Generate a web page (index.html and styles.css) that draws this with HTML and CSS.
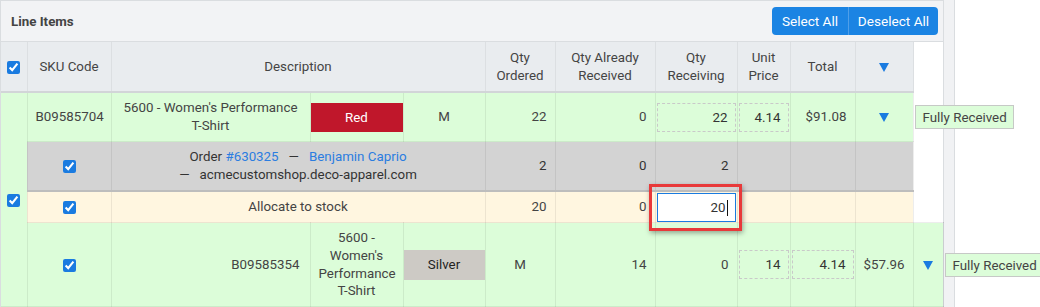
FILE: index.html
```html
<!DOCTYPE html>
<html>
<head>
	<meta charset="utf-8">
	<meta name="viewport" content="width=device-width, initial-scale=1">
	<title>Line Items</title>
	<link rel="stylesheet" href="styles.css">
</head>
<body>
	<div class="page">
		<div class="panel">
			<div class="panel-head">
				<span class="panel-title">Line Items</span>
				<div class="btn-group">
					<button class="btn btn-select">Select All</button>
					<button class="btn btn-deselect">Deselect All</button>
				</div>
			</div>
			<table class="items">
				<colgroup>
					<col style="width:26px"><col style="width:84px"><col style="width:199px">
					<col style="width:93px"><col style="width:82px"><col style="width:70px">
					<col style="width:100px"><col style="width:82px"><col style="width:53px">
					<col style="width:65px"><col style="width:58px"><col style="width:30px">
					<col style="width:0px">
				</colgroup>
				<thead>
					<tr>
						<th class="col-check"><input type="checkbox" checked></th>
						<th>SKU Code</th>
						<th colspan="3">Description</th>
						<th>Qty<br>Ordered</th>
						<th>Qty Already<br>Received</th>
						<th>Qty<br>Receiving</th>
						<th>Unit<br>Price</th>
						<th>Total</th>
						<th><svg class="tri" width="10" height="9" viewBox="0 0 10 9"><polygon points="0,0 10,0 5,9"/></svg></th>
					</tr>
				</thead>
				<tbody>
					<tr class="row-item row-first">
						<td class="col-check" rowspan="4"><input type="checkbox" checked></td>
						<td class="center">B09585704</td>
						<td class="center">5600 - Women's Performance T-Shirt</td>
						<td class="cell-swatch"><span class="swatch swatch-red">Red</span></td>
						<td class="center">M</td>
						<td class="num">22</td>
						<td class="num">0</td>
						<td class="cell-input"><span class="qty-field">22</span></td>
						<td class="cell-input"><span class="qty-field">4.14</span></td>
						<td class="num">$91.08</td>
						<td class="center"><svg class="tri" width="10" height="9" viewBox="0 0 10 9"><polygon points="0,0 10,0 5,9"/></svg></td>
						<td class="cell-badge"><span class="badge">Fully Received</span></td>
					</tr>
					<tr class="row-order">
						<td class="center"><input type="checkbox" checked></td>
						<td class="center" colspan="3">
							Order <a href="#">#630325</a><span class="sep">—</span><a href="#">Benjamin Caprio</a><br>
							<span class="sep sep-lead">—</span>acmecustomshop.deco-apparel.com
						</td>
						<td class="num">2</td>
						<td class="num">0</td>
						<td class="num">2</td>
						<td></td>
						<td></td>
						<td></td>
					</tr>
					<tr class="row-stock">
						<td class="center"><input type="checkbox" checked></td>
						<td class="center stock-label" colspan="3">Allocate to stock</td>
						<td class="num">20</td>
						<td class="num">0</td>
						<td class="cell-input">
							<span class="highlight"><span class="qty-field is-active">20<span class="caret"></span></span></span>
						</td>
						<td></td>
						<td></td>
						<td></td>
					</tr>
					<tr class="row-item row-last">
						<td class="center"><input type="checkbox" checked></td>
						<td class="num sku-right">B09585354</td>
						<td class="center">5600 - Women's Performance T-Shirt</td>
						<td class="cell-swatch"><span class="swatch swatch-silver">Silver</span></td>
						<td class="center">M</td>
						<td class="num">14</td>
						<td class="num">0</td>
						<td class="cell-input"><span class="qty-field">14</span></td>
						<td class="cell-input"><span class="qty-field">4.14</span></td>
						<td class="num">$57.96</td>
						<td class="center"><svg class="tri" width="10" height="9" viewBox="0 0 10 9"><polygon points="0,0 10,0 5,9"/></svg></td>
						<td class="cell-badge"><span class="badge">Fully Received</span></td>
					</tr>
				</tbody>
			</table>
		</div>
		<div class="side-strip"></div>
	</div>
</body>
</html>
```

FILE: styles.css
```css
		body{
			margin: 0;
			font-family: Roboto, "Liberation Sans", sans-serif;
			font-size: 13.33px;
			color: #444;
			background: #fff;
		}
		.page{
			display: flex;
			height: 307px;
			overflow: hidden;
		}
		.panel{
			width: 942px;
			border: 1px solid #dadde0;
			border-bottom: none;
			background: #fff;
			position: relative;
			z-index: 1;
		}
		.side-strip{
			width: 10px;
			background: #f1f2f4;
			border-right: 1px solid #dadde0;
		}
		.panel-head{
			display: flex;
			align-items: center;
			justify-content: space-between;
			height: 40px;
			padding: 0 5px 0 10px;
			background: #f2f3f5;
			border-bottom: 1px solid #dadde0;
		}
		.panel-title{
			font-weight: bold;
			color: #444;
		}
		.btn-group{
			display: flex;
			border-radius: 4px;
			overflow: hidden;
		}
		.btn{
			height: 28px;
			border: none;
			background: #1b84e3;
			color: #fff;
			font-family: inherit;
			font-size: 13.6px;
			padding: 0;
		}
		.btn-select{
			width: 76px;
		}
		.btn-deselect{
			width: 90px;
			border-left: 1px solid #4f9fe9;
		}
		.items{
			border-collapse: collapse;
			table-layout: fixed;
			width: 942px;
			line-height: 17.6px;
		}
		.items th{
			height: 49px;
			padding: 0 6px;
			background: #e9ecef;
			font-weight: normal;
			color: #444;
			text-align: center;
			border: 1px solid #dcdfe2;
			border-top: none;
			border-bottom: 2px solid #d2d5d8;
		}
		.items th:first-child{
			border-left: none;
		}
		.items td{
			padding: 0 8px;
			vertical-align: middle;
			border: 1px solid rgba(0, 0, 0, 0.07);
		}
		.items td:first-child{
			border-left: none;
		}
		.items input[type="checkbox"]{
			margin: 0;
			width: 13px;
			height: 13px;
			vertical-align: middle;
			accent-color: #1a7be0;
		}
		.items .col-check{
			padding: 0;
			text-align: center;
		}
		.row-item td{
			background: #dcfdd9;
		}
		.row-first td{
			height: 48px;
		}
		.row-last td{
			height: 83px;
		}
		.row-order td{
			height: 48px;
			background: #d3d3d3;
			color: #333;
			border-bottom: 2px solid #bdbdbd;
		}
		.row-stock td{
			height: 30px;
			background: #fff6e0;
			color: #444;
		}
		.items td.cell-badge{
			background: none;
			border: none;
			padding: 0;
			white-space: nowrap;
		}
		.center{
			text-align: center;
		}
		.num{
			text-align: right;
		}
		.items td.num{
			padding-right: 8px;
		}
		.items td.sku-right{
			padding-right: 10px;
		}
		.stock-label{
			padding-left: 22px;
		}
		.tri{
			display: inline-block;
			vertical-align: middle;
			fill: #1a7be0;
		}
		.items td.cell-swatch{
			padding: 0;
		}
		.swatch{
			display: block;
			height: 29px;
			line-height: 29px;
			text-align: center;
		}
		.swatch-red{
			background: #c0172b;
			color: #fff;
		}
		.swatch-silver{
			height: 30px;
			line-height: 30px;
			background: #cdcac5;
			color: #222;
		}
		.items td.cell-input{
			padding: 0 1px;
		}
		.qty-field{
			display: block;
			box-sizing: border-box;
			height: 29px;
			line-height: 27px;
			padding: 0 7px;
			border: 1px dashed #c9c9c9;
			text-align: right;
			color: #333;
		}
		.qty-field.is-active{
			background: #fff;
			border: 1px solid #1a7be0;
		}
		.caret{
			display: inline-block;
			width: 1px;
			height: 16px;
			margin-left: 1px;
			background: #111;
			vertical-align: middle;
		}
		.highlight{
			display: block;
			position: relative;
		}
		.highlight::after{
			content: "";
			position: absolute;
			top: -9px;
			bottom: -9px;
			left: -8px;
			right: -6px;
			border: 3px solid #e8393a;
			box-shadow: 1px 2px 5px rgba(0, 0, 0, 0.35);
			pointer-events: none;
		}
		.badge{
			display: inline-block;
			margin-left: 1px;
			height: 24px;
			line-height: 23px;
			padding: 0 6px 0 7px;
			box-sizing: border-box;
			background: #dcfdd9;
			border: 1px solid #c6c9c6;
			color: #444;
			vertical-align: middle;
		}
		a{
			color: #2b7de0;
			text-decoration: none;
		}
		.sep{
			margin: 0 10px;
			color: #333;
		}
		.sep-lead{
			margin: 0 10px 0 0;
		}
```
